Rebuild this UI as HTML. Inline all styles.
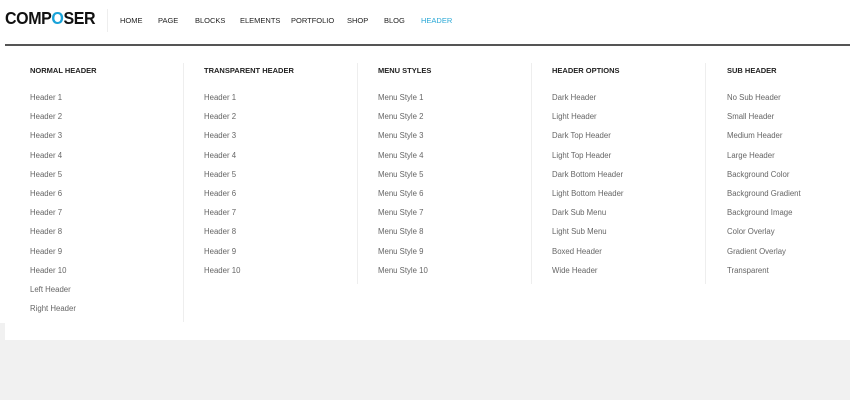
<!DOCTYPE html>
<html><head><meta charset="utf-8"><style>
*{margin:0;padding:0;box-sizing:border-box}
body{width:850px;height:400px;background:#f1f1f1;font-family:"Liberation Sans",sans-serif;position:relative;overflow:hidden}
.top{position:absolute;left:0;top:0;width:850px;height:323px;background:#fff}
.logo{position:absolute;left:5px;top:10px;font-weight:bold;font-size:16px;color:#111;letter-spacing:-0.4px;transform:scaleY(1.08);transform-origin:left top}
.logo span{color:#1aa3d9}
.vdiv{position:absolute;left:107px;top:9px;width:1px;height:23px;background:#eee}
.nav{position:absolute;top:16px;font-size:7.5px;color:#222}
.nav.act{color:#2aa8d6}
.line{position:absolute;left:5px;top:44px;width:845px;height:2px;background:#555}
.panel{position:absolute;left:5px;top:46px;width:845px;height:294px;background:#fff}
.col{position:absolute;top:66px}
.col h4{font-size:7.5px;font-weight:bold;color:#222;height:27px}
.col div{font-size:7.8px;color:#666;height:19.2px}
.d{position:absolute;width:1px;background:#eee;top:63px}
</style></head><body>
<div class="top"></div>
<div class="logo">COMP<span>O</span>SER</div>
<div class="vdiv"></div>
<div class="nav" style="left:120px">HOME</div>
<div class="nav" style="left:158px">PAGE</div>
<div class="nav" style="left:195px">BLOCKS</div>
<div class="nav" style="left:240px">ELEMENTS</div>
<div class="nav" style="left:291px">PORTFOLIO</div>
<div class="nav" style="left:347px">SHOP</div>
<div class="nav" style="left:384px">BLOG</div>
<div class="nav act" style="left:421px">HEADER</div>
<div class="panel"></div>
<div class="line"></div>
<div class="d" style="left:183px;height:259px"></div>
<div class="d" style="left:357px;height:221px"></div>
<div class="d" style="left:531px;height:221px"></div>
<div class="d" style="left:705px;height:221px"></div>
<div class="col" style="left:30px"><h4>NORMAL HEADER</h4><div>Header 1</div><div>Header 2</div><div>Header 3</div><div>Header 4</div><div>Header 5</div><div>Header 6</div><div>Header 7</div><div>Header 8</div><div>Header 9</div><div>Header 10</div><div>Left Header</div><div>Right Header</div></div>
<div class="col" style="left:204px"><h4>TRANSPARENT HEADER</h4><div>Header 1</div><div>Header 2</div><div>Header 3</div><div>Header 4</div><div>Header 5</div><div>Header 6</div><div>Header 7</div><div>Header 8</div><div>Header 9</div><div>Header 10</div></div>
<div class="col" style="left:378px"><h4>MENU STYLES</h4><div>Menu Style 1</div><div>Menu Style 2</div><div>Menu Style 3</div><div>Menu Style 4</div><div>Menu Style 5</div><div>Menu Style 6</div><div>Menu Style 7</div><div>Menu Style 8</div><div>Menu Style 9</div><div>Menu Style 10</div></div>
<div class="col" style="left:552px"><h4>HEADER OPTIONS</h4><div>Dark Header</div><div>Light Header</div><div>Dark Top Header</div><div>Light Top Header</div><div>Dark Bottom Header</div><div>Light Bottom Header</div><div>Dark Sub Menu</div><div>Light Sub Menu</div><div>Boxed Header</div><div>Wide Header</div></div>
<div class="col" style="left:727px"><h4>SUB HEADER</h4><div>No Sub Header</div><div>Small Header</div><div>Medium Header</div><div>Large Header</div><div>Background Color</div><div>Background Gradient</div><div>Background Image</div><div>Color Overlay</div><div>Gradient Overlay</div><div>Transparent</div></div>
</body></html>
